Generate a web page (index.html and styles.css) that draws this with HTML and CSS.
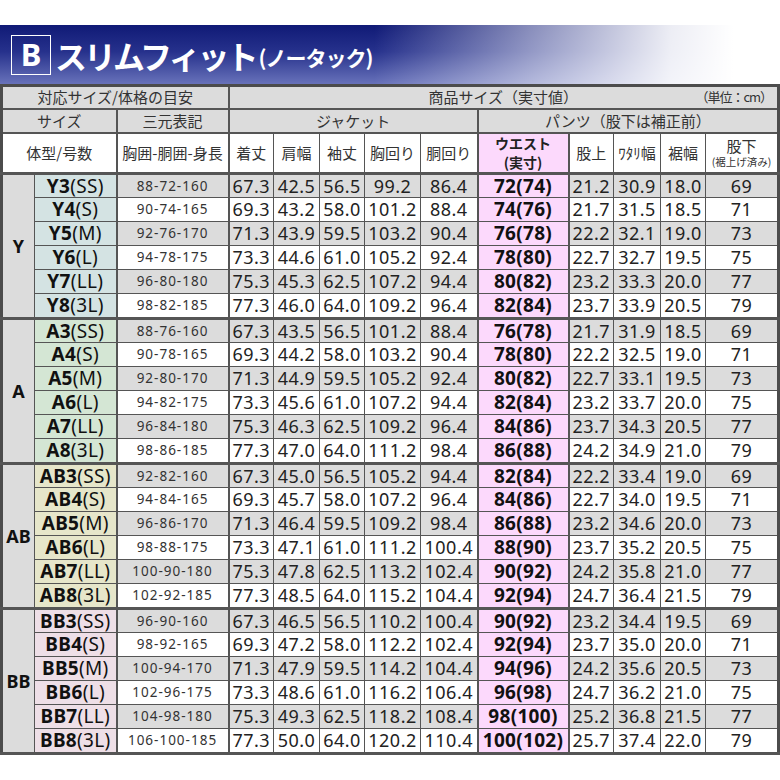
FILE: index.html
```html
<!DOCTYPE html>
<html lang="ja">
<head>
<meta charset="utf-8">
<title>Bスリムフィット サイズ表</title>
<link rel="stylesheet" href="styles.css">
</head>
<body>
<div class="page">
  <div class="banner">
    <span class="badge">B</span>
    <span class="title">スリムフィット</span>
    <span class="subtitle">(ノータック)</span>
  </div>
  <table class="sizes">
    <colgroup>
      <col class="c-grp"><col class="c-size"><col class="c-san">
      <col class="c-n45"><col class="c-n46"><col class="c-n45"><col class="c-n56"><col class="c-n57">
      <col class="c-waist"><col class="c-n45"><col class="c-n47"><col class="c-n45"><col class="c-inseam">
    </colgroup>
    <thead>
      <tr class="h1">
        <th colspan="3" class="vr2">対応サイズ/体格の目安</th>
        <th colspan="10">
          <div class="prod"><span></span><span class="prod-title">商品サイズ（実寸値）</span><span class="unit">（単位：cm）</span></div>
        </th>
      </tr>
      <tr class="h2">
        <th colspan="2" class="vr2">サイズ</th>
        <th class="vr2">三元表記</th>
        <th colspan="5" class="vr2">ジャケット</th>
        <th colspan="5">パンツ（股下は補正前）</th>
      </tr>
      <tr class="h3">
        <th colspan="2" class="vr2">体型/号数</th>
        <th class="vr2">胸囲-胴囲-身長</th>
        <th>着丈</th><th>肩幅</th><th>袖丈</th><th>胸回り</th><th class="vr2">胴回り</th>
        <th class="waist-h"><span class="wl">ウエスト</span><span class="wl">(実寸)</span></th>
        <th>股上</th><th>ﾜﾀﾘ幅</th><th>裾幅</th>
        <th class="inseam-h">股下<small>(裾上げ済み)</small></th>
      </tr>
    </thead>
    <tbody class="g-y">
      <tr class="odd"><td rowspan="6" class="grp">Y</td><td class="size"><b>Y3</b>(SS)</td><td class="san">88-72-160</td><td>67.3</td><td>42.5</td><td>56.5</td><td>99.2</td><td class="vr2">86.4</td><td class="waist">72(74)</td><td>21.2</td><td>30.9</td><td>18.0</td><td>69</td></tr>
      <tr><td class="size"><b>Y4</b>(S)</td><td class="san">90-74-165</td><td>69.3</td><td>43.2</td><td>58.0</td><td>101.2</td><td class="vr2">88.4</td><td class="waist">74(76)</td><td>21.7</td><td>31.5</td><td>18.5</td><td>71</td></tr>
      <tr class="odd"><td class="size"><b>Y5</b>(M)</td><td class="san">92-76-170</td><td>71.3</td><td>43.9</td><td>59.5</td><td>103.2</td><td class="vr2">90.4</td><td class="waist">76(78)</td><td>22.2</td><td>32.1</td><td>19.0</td><td>73</td></tr>
      <tr><td class="size"><b>Y6</b>(L)</td><td class="san">94-78-175</td><td>73.3</td><td>44.6</td><td>61.0</td><td>105.2</td><td class="vr2">92.4</td><td class="waist">78(80)</td><td>22.7</td><td>32.7</td><td>19.5</td><td>75</td></tr>
      <tr class="odd"><td class="size"><b>Y7</b>(LL)</td><td class="san">96-80-180</td><td>75.3</td><td>45.3</td><td>62.5</td><td>107.2</td><td class="vr2">94.4</td><td class="waist">80(82)</td><td>23.2</td><td>33.3</td><td>20.0</td><td>77</td></tr>
      <tr class="last"><td class="size"><b>Y8</b>(3L)</td><td class="san">98-82-185</td><td>77.3</td><td>46.0</td><td>64.0</td><td>109.2</td><td class="vr2">96.4</td><td class="waist">82(84)</td><td>23.7</td><td>33.9</td><td>20.5</td><td>79</td></tr>
    </tbody>
    <tbody class="g-a">
      <tr class="odd"><td rowspan="6" class="grp">A</td><td class="size"><b>A3</b>(SS)</td><td class="san">88-76-160</td><td>67.3</td><td>43.5</td><td>56.5</td><td>101.2</td><td class="vr2">88.4</td><td class="waist">76(78)</td><td>21.7</td><td>31.9</td><td>18.5</td><td>69</td></tr>
      <tr><td class="size"><b>A4</b>(S)</td><td class="san">90-78-165</td><td>69.3</td><td>44.2</td><td>58.0</td><td>103.2</td><td class="vr2">90.4</td><td class="waist">78(80)</td><td>22.2</td><td>32.5</td><td>19.0</td><td>71</td></tr>
      <tr class="odd"><td class="size"><b>A5</b>(M)</td><td class="san">92-80-170</td><td>71.3</td><td>44.9</td><td>59.5</td><td>105.2</td><td class="vr2">92.4</td><td class="waist">80(82)</td><td>22.7</td><td>33.1</td><td>19.5</td><td>73</td></tr>
      <tr><td class="size"><b>A6</b>(L)</td><td class="san">94-82-175</td><td>73.3</td><td>45.6</td><td>61.0</td><td>107.2</td><td class="vr2">94.4</td><td class="waist">82(84)</td><td>23.2</td><td>33.7</td><td>20.0</td><td>75</td></tr>
      <tr class="odd"><td class="size"><b>A7</b>(LL)</td><td class="san">96-84-180</td><td>75.3</td><td>46.3</td><td>62.5</td><td>109.2</td><td class="vr2">96.4</td><td class="waist">84(86)</td><td>23.7</td><td>34.3</td><td>20.5</td><td>77</td></tr>
      <tr class="last"><td class="size"><b>A8</b>(3L)</td><td class="san">98-86-185</td><td>77.3</td><td>47.0</td><td>64.0</td><td>111.2</td><td class="vr2">98.4</td><td class="waist">86(88)</td><td>24.2</td><td>34.9</td><td>21.0</td><td>79</td></tr>
    </tbody>
    <tbody class="g-ab">
      <tr class="odd"><td rowspan="6" class="grp">AB</td><td class="size"><b>AB3</b>(SS)</td><td class="san">92-82-160</td><td>67.3</td><td>45.0</td><td>56.5</td><td>105.2</td><td class="vr2">94.4</td><td class="waist">82(84)</td><td>22.2</td><td>33.4</td><td>19.0</td><td>69</td></tr>
      <tr><td class="size"><b>AB4</b>(S)</td><td class="san">94-84-165</td><td>69.3</td><td>45.7</td><td>58.0</td><td>107.2</td><td class="vr2">96.4</td><td class="waist">84(86)</td><td>22.7</td><td>34.0</td><td>19.5</td><td>71</td></tr>
      <tr class="odd"><td class="size"><b>AB5</b>(M)</td><td class="san">96-86-170</td><td>71.3</td><td>46.4</td><td>59.5</td><td>109.2</td><td class="vr2">98.4</td><td class="waist">86(88)</td><td>23.2</td><td>34.6</td><td>20.0</td><td>73</td></tr>
      <tr><td class="size"><b>AB6</b>(L)</td><td class="san">98-88-175</td><td>73.3</td><td>47.1</td><td>61.0</td><td>111.2</td><td class="vr2">100.4</td><td class="waist">88(90)</td><td>23.7</td><td>35.2</td><td>20.5</td><td>75</td></tr>
      <tr class="odd"><td class="size"><b>AB7</b>(LL)</td><td class="san">100-90-180</td><td>75.3</td><td>47.8</td><td>62.5</td><td>113.2</td><td class="vr2">102.4</td><td class="waist">90(92)</td><td>24.2</td><td>35.8</td><td>21.0</td><td>77</td></tr>
      <tr class="last"><td class="size"><b>AB8</b>(3L)</td><td class="san">102-92-185</td><td>77.3</td><td>48.5</td><td>64.0</td><td>115.2</td><td class="vr2">104.4</td><td class="waist">92(94)</td><td>24.7</td><td>36.4</td><td>21.5</td><td>79</td></tr>
    </tbody>
    <tbody class="g-bb">
      <tr class="odd"><td rowspan="6" class="grp">BB</td><td class="size"><b>BB3</b>(SS)</td><td class="san">96-90-160</td><td>67.3</td><td>46.5</td><td>56.5</td><td>110.2</td><td class="vr2">100.4</td><td class="waist">90(92)</td><td>23.2</td><td>34.4</td><td>19.5</td><td>69</td></tr>
      <tr><td class="size"><b>BB4</b>(S)</td><td class="san">98-92-165</td><td>69.3</td><td>47.2</td><td>58.0</td><td>112.2</td><td class="vr2">102.4</td><td class="waist">92(94)</td><td>23.7</td><td>35.0</td><td>20.0</td><td>71</td></tr>
      <tr class="odd"><td class="size"><b>BB5</b>(M)</td><td class="san">100-94-170</td><td>71.3</td><td>47.9</td><td>59.5</td><td>114.2</td><td class="vr2">104.4</td><td class="waist">94(96)</td><td>24.2</td><td>35.6</td><td>20.5</td><td>73</td></tr>
      <tr><td class="size"><b>BB6</b>(L)</td><td class="san">102-96-175</td><td>73.3</td><td>48.6</td><td>61.0</td><td>116.2</td><td class="vr2">106.4</td><td class="waist">96(98)</td><td>24.7</td><td>36.2</td><td>21.0</td><td>75</td></tr>
      <tr class="odd"><td class="size"><b>BB7</b>(LL)</td><td class="san">104-98-180</td><td>75.3</td><td>49.3</td><td>62.5</td><td>118.2</td><td class="vr2">108.4</td><td class="waist">98(100)</td><td>25.2</td><td>36.8</td><td>21.5</td><td>77</td></tr>
      <tr class="last"><td class="size"><b>BB8</b>(3L)</td><td class="san">106-100-185</td><td>77.3</td><td>50.0</td><td>64.0</td><td>120.2</td><td class="vr2">110.4</td><td class="waist">100(102)</td><td>25.7</td><td>37.4</td><td>22.0</td><td>79</td></tr>
    </tbody>
  </table>
</div>
</body>
</html>
```
FILE: styles.css
```css
* { box-sizing: border-box; }
html, body { margin: 0; padding: 0; background: #fff; }
body {
  font-family: "Noto Sans", "Noto Sans CJK JP", sans-serif;
  color: #222;
}
.page { width: 780px; padding-top: 25px; }

.banner {
  height: 59px;
  display: flex;
  align-items: center;
  padding-left: 11px;
  color: #fff;
  background:
    linear-gradient(to right, rgba(255,255,255,0) 0%, rgba(255,255,255,0) 48%, rgba(255,255,255,0.5) 68%, rgba(255,255,255,0.92) 86%, #fff 94%),
    linear-gradient(to bottom, #101a76 0%, #26318c 45%, #6872ba 100%);
}
.badge {
  width: 40px;
  height: 40px;
  border: 1px solid #fff;
  display: flex;
  align-items: center;
  justify-content: center;
  font-family: "Noto Sans", sans-serif;
  font-weight: 700;
  font-size: 31px;
  line-height: 1;
  margin-right: 4px;
}
.title {
  font-family: "Noto Sans CJK JP", sans-serif;
  font-weight: 700;
  font-size: 32px;
  letter-spacing: -3px;
  line-height: 1;
}
.subtitle {
  font-family: "Noto Sans CJK JP", sans-serif;
  font-weight: 700;
  font-size: 21px;
  letter-spacing: -1px;
  line-height: 1;
  margin-left: 3px;
  margin-top: 6px;
}

.sizes {
  width: 780px;
  table-layout: fixed;
  border-collapse: collapse;
  border: 3px solid #4c4c4c;
}
.c-grp { width: 33px; }
.c-size { width: 82px; }
.c-san { width: 112px; }
.c-n45 { width: 45px; }
.c-n46 { width: 46px; }
.c-n47 { width: 47px; }
.c-n56 { width: 56px; }
.c-n57 { width: 57px; }
.c-waist { width: 91px; }
.c-inseam { width: 73px; }

.sizes th, .sizes td {
  border: 1px solid #555;
  padding: 0;
  text-align: center;
  vertical-align: middle;
  white-space: nowrap;
  overflow: hidden;
}
.sizes th {
  font-family: "Noto Sans CJK JP", sans-serif;
  font-weight: 400;
  font-size: 15px;
  color: #333;
  line-height: 18px;
}
.sizes .vr2 { border-right-width: 2px; }

.h1 th { background: #dcdcdc; height: 23px; border-bottom-width: 2px; }
.h2 th { background: #dcdcdc; height: 24px; border-bottom-width: 2px; }
.h3 th { background: #fff; height: 40px; border-bottom-width: 3px; }

.prod {
  display: grid;
  grid-template-columns: 1fr auto 1fr;
  align-items: center;
}
.unit {
  justify-self: end;
  font-size: 13px;
  padding-right: 5px;
  letter-spacing: -1px;
}
.sizes th.waist-h {
  background: #fcd9fc;
  font-weight: 700;
  color: #222;
  font-size: 14px;
  border-right-width: 2px;
}
.wl {
  display: block;
  line-height: 19px;
}
.inseam-h small {
  display: block;
  font-size: 10.5px;
  line-height: 13px;
}

.sizes td {
  height: 24px;
  font-size: 18px;
  letter-spacing: 0.5px;
  line-height: 22px;
  background: #fff;
  color: #222;
}
.sizes tr.odd td { background: #dcdcdc; }
.sizes tr.last td { border-bottom-width: 3px; height: 25px; }
.sizes td.grp {
  font-weight: 700;
  font-size: 18px;
  letter-spacing: 0;
  color: #111;
  border-bottom-width: 3px;
}
.sizes td.size {
  font-size: 19px;
  letter-spacing: 0.3px;
  color: #111;
  border-right-width: 2px;
}
.sizes td.size b { font-weight: 700; }
.sizes td.san {
  font-size: 13.5px;
  letter-spacing: 1px;
  border-right-width: 2px;
  color: #333;
}
.sizes td.waist, .sizes tr.odd td.waist {
  background: #fcd9fc;
  font-weight: 700;
  font-size: 19px;
  letter-spacing: 0.3px;
  color: #111;
  border-right-width: 2px;
}

.g-y td.grp, .g-y td.size, .g-y tr.odd td.size { background: #d4e3e3; }
.g-a td.grp, .g-a td.size, .g-a tr.odd td.size { background: #d4e6d4; }
.g-ab td.grp, .g-ab td.size, .g-ab tr.odd td.size { background: #e6e6ca; }
.g-bb td.grp, .g-bb td.size, .g-bb tr.odd td.size { background: #eedfe7; }
```
